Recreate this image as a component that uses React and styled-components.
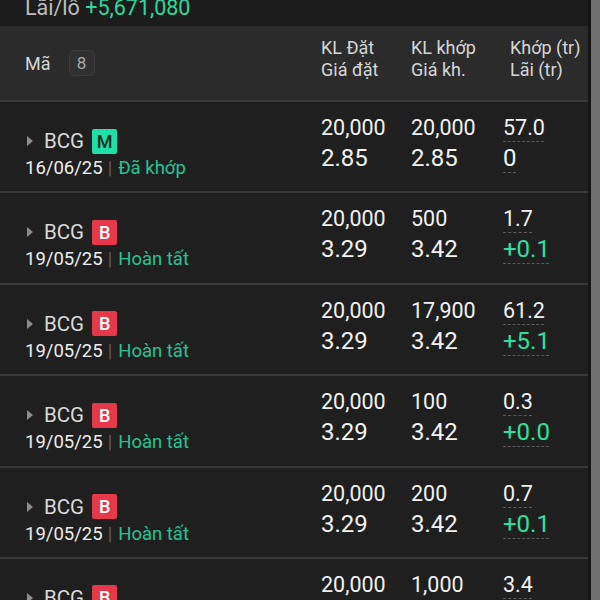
import React from "react";
import styled, { createGlobalStyle } from "styled-components";

const GlobalStyle = createGlobalStyle`
  html, body {
    margin: 0;
    padding: 0;
    background: #1f1f1f;
  }
  body {
    font-family: Roboto, "Noto Sans", sans-serif;
    color: #eeeeee;
  }
`;

const Screen = styled.div`
  display: flex;
  width: 600px;
  height: 600px;
  overflow: hidden;
  background: #1f1f1f;
`;

const Main = styled.div`
  flex: 1;
  min-width: 0;
  display: flex;
  flex-direction: column;
`;

const ScrollTrack = styled.div`
  width: 9px;
  flex-shrink: 0;
  background: #707070;
  border-left: 3px solid #151515;
`;

const Summary = styled.div`
  flex-shrink: 0;
  height: 26px;
  overflow: hidden;
  padding-left: 25px;
  background: #1c1c1c;
`;

const SummaryText = styled.div`
  margin-top: -3px;
  font-size: 21.5px;
  line-height: 21px;
  color: #bdbdbd;
  white-space: nowrap;
`;

const Profit = styled.span`
  color: #2fd99c;
`;

const HeaderBand = styled.div`
  flex-shrink: 0;
  display: grid;
  grid-template-columns: 296px 90px 92px 1fr;
  height: 74px;
  padding-left: 25px;
  background: #2b2b2b;
  color: #d6d6d6;
  font-size: 18px;
`;

const SymbolHead = styled.div`
  display: flex;
  align-items: center;
  gap: 18px;
`;

const CountBadge = styled.span`
  display: inline-flex;
  align-items: center;
  justify-content: center;
  width: 26px;
  height: 26px;
  box-sizing: border-box;
  border: 1px solid #3c3c3c;
  border-radius: 5px;
  background: #303030;
  color: #a8a8a8;
  font-size: 17px;
`;

const HeadCell = styled.div`
  padding-top: 11px;
  padding-left: ${(p) => (p.$shift ? "7px" : "0")};
  line-height: 22px;
  white-space: nowrap;
`;

const Row = styled.div`
  display: grid;
  grid-template-columns: 296px 90px 92px 1fr;
  box-sizing: border-box;
  height: 91.4px;
  flex-shrink: 0;
  padding-left: 25px;
  border-top: 2px solid #383838;
  background: #1f1f1f;
`;

const SymbolCell = styled.div`
  padding-top: 26px;
`;

const SymbolLine = styled.div`
  display: flex;
  align-items: center;
  height: 26px;
  font-size: 20.5px;
  color: #d9d9d9;
`;

const Caret = styled.span`
  width: 0;
  height: 0;
  margin: 0 11px 0 2px;
  border-left: 6px solid #8c8c8c;
  border-top: 5px solid transparent;
  border-bottom: 5px solid transparent;
`;

const Side = styled.span`
  display: inline-flex;
  align-items: center;
  justify-content: center;
  width: 25px;
  height: 25px;
  margin-left: 8px;
  border-radius: 2px;
  font-size: 18px;
  font-weight: 500;
  background: ${(p) => (p.$buy ? "#1fdfa6" : "#e5384b")};
  color: ${(p) => (p.$buy ? "#0e2c22" : "#ffffff")};
`;

const DateLine = styled.div`
  margin-top: 2px;
  font-size: 18.5px;
  line-height: 24px;
  color: #eeeeee;
  white-space: nowrap;
`;

const Pipe = styled.span`
  margin: 0 6px 0 5px;
  color: #5e5e5e;
`;

const Status = styled.span`
  color: #27c492;
`;

const ValueCell = styled.div`
  padding-top: 12px;
  white-space: nowrap;
`;

const Qty = styled.div`
  font-size: 21.5px;
  line-height: 28px;
  color: #f2f2f2;
`;

const Price = styled.div`
  font-size: 24px;
  line-height: 32px;
  color: ${(p) => (p.$up ? "#2fe09d" : "#f2f2f2")};
`;

const Dotted = styled.span`
  text-decoration: underline dashed #5a5a5a;
  text-decoration-thickness: 1px;
  text-underline-offset: 6px;
`;

const orders = [
  { side: "M", date: "16/06/25", status: "Đã khớp", qty: "20,000", price: "2.85", filled: "20,000", avg: "2.85", value: "57.0", pnl: "0" },
  { side: "B", date: "19/05/25", status: "Hoàn tất", qty: "20,000", price: "3.29", filled: "500", avg: "3.42", value: "1.7", pnl: "+0.1" },
  { side: "B", date: "19/05/25", status: "Hoàn tất", qty: "20,000", price: "3.29", filled: "17,900", avg: "3.42", value: "61.2", pnl: "+5.1" },
  { side: "B", date: "19/05/25", status: "Hoàn tất", qty: "20,000", price: "3.29", filled: "100", avg: "3.42", value: "0.3", pnl: "+0.0" },
  { side: "B", date: "19/05/25", status: "Hoàn tất", qty: "20,000", price: "3.29", filled: "200", avg: "3.42", value: "0.7", pnl: "+0.1" },
  { side: "B", date: "19/05/25", status: "Hoàn tất", qty: "20,000", price: "3.29", filled: "1,000", avg: "3.42", value: "3.4", pnl: "+0.1" },
];

const OrderRow = ({ o }) => (
  <Row>
    <SymbolCell>
      <SymbolLine>
        <Caret />
        BCG
        <Side $buy={o.side === "M"}>{o.side}</Side>
      </SymbolLine>
      <DateLine>
        {o.date}
        <Pipe>|</Pipe>
        <Status>{o.status}</Status>
      </DateLine>
    </SymbolCell>
    <ValueCell>
      <Qty>{o.qty}</Qty>
      <Price>{o.price}</Price>
    </ValueCell>
    <ValueCell>
      <Qty>{o.filled}</Qty>
      <Price>{o.avg}</Price>
    </ValueCell>
    <ValueCell>
      <Qty>
        <Dotted>{o.value}</Dotted>
      </Qty>
      <Price $up={o.pnl.startsWith("+")}>
        <Dotted>{o.pnl}</Dotted>
      </Price>
    </ValueCell>
  </Row>
);

const App = () => {
  return (
    <Screen>
      <GlobalStyle />
      <Main>
        <Summary>
          <SummaryText>
            Lãi/lỗ <Profit>+5,671,080</Profit>
          </SummaryText>
        </Summary>
        <HeaderBand>
          <SymbolHead>
            Mã
            <CountBadge>8</CountBadge>
          </SymbolHead>
          <HeadCell>
            KL Đặt
            <br />
            Giá đặt
          </HeadCell>
          <HeadCell>
            KL khớp
            <br />
            Giá kh.
          </HeadCell>
          <HeadCell $shift>
            Khớp (tr)
            <br />
            Lãi (tr)
          </HeadCell>
        </HeaderBand>
        {orders.map((o, i) => (
          <OrderRow key={i} o={o} />
        ))}
      </Main>
      <ScrollTrack />
    </Screen>
  );
};

export default App;
